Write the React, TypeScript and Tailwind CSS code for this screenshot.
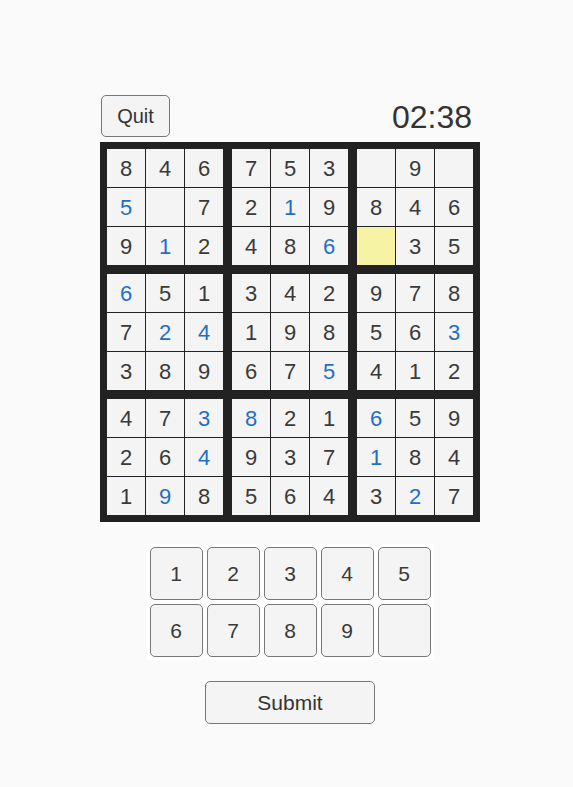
import React from 'react'

type Cell = { v: string; given?: boolean; hl?: boolean }

// g = given (dark), b = entered (blue), _ = empty, Y = highlighted empty
const raw = [
  '8 4 6 7 5 3 _ 9 _',
  '5b _ 7 2 1b 9 8 4 6',
  '9 1b 2 4 8 6b Y 3 5',
  '6b 5 1 3 4 2 9 7 8',
  '7 2b 4b 1 9 8 5 6 3b',
  '3 8 9 6 7 5b 4 1 2',
  '4 7 3b 8b 2 1 6b 5 9',
  '2 6 4b 9 3 7 1b 8 4',
  '1 9b 8 5 6 4 3 2b 7',
]

const board: Cell[][] = raw.map((line) =>
  line.split(' ').map((t) => {
    if (t === '_') return { v: '' }
    if (t === 'Y') return { v: '', hl: true }
    if (t.endsWith('b')) return { v: t[0] }
    return { v: t, given: true }
  })
)

const font = { fontFamily: '"Liberation Sans", Arial, sans-serif' }

function Box({ br, bc }: { br: number; bc: number }) {
  const cells: Cell[] = []
  for (let r = 0; r < 3; r++) {
    for (let c = 0; c < 3; c++) {
      cells.push(board[br * 3 + r][bc * 3 + c])
    }
  }
  return (
    <div className="grid grid-cols-3 gap-px bg-[#222]">
      {cells.map((cell, i) => (
        <div
          key={i}
          className={`w-[38px] h-[38px] flex items-center justify-center text-[22px] ${
            cell.hl ? 'bg-[#f6f4a4]' : 'bg-[#f4f4f4]'
          } ${cell.given ? 'text-[#3a3a3a]' : 'text-[#1f6fc5]'}`}
        >
          {cell.v}
        </div>
      ))}
    </div>
  )
}

export default function App() {
  const keys = ['1', '2', '3', '4', '5', '6', '7', '8', '9', '']

  return (
    <div className="w-[573px] h-[787px] bg-[#fafafa] flex justify-center pl-[7px]" style={font}>
      <div className="flex flex-col items-center pt-[95px]">
        {/* Header */}
        <div className="w-[380px] flex items-end justify-between">
          <button className="ml-px w-[69px] h-[42px] rounded-[5px] border border-[#777] bg-[#f4f4f4] text-[20px] text-[#333]">
            Quit
          </button>
          <div className="text-[32px] leading-none text-[#333] pr-[8px] pb-[4px]">02:38</div>
        </div>

        {/* Board */}
        <div className="mt-[5px] bg-[#222] p-[7px] grid grid-cols-3 gap-[9px]">
          {[0, 1, 2].map((br) =>
            [0, 1, 2].map((bc) => <Box key={`${br}-${bc}`} br={br} bc={bc} />)
          )}
        </div>

        {/* Keypad */}
        <div className="mt-[22px] bg-white p-[3px] grid grid-cols-5 gap-[4px]">
          {keys.map((k, i) => (
            <button
              key={i}
              className="w-[53px] h-[53px] rounded-[5px] border border-[#777] bg-[#f4f4f4] text-[21px] text-[#3a3a3a]"
            >
              {k}
            </button>
          ))}
        </div>

        <button className="mt-[21px] w-[170px] h-[43px] rounded-[5px] border border-[#777] bg-[#f4f4f4] text-[21px] text-[#333]">
          Submit
        </button>
      </div>
    </div>
  )
}
